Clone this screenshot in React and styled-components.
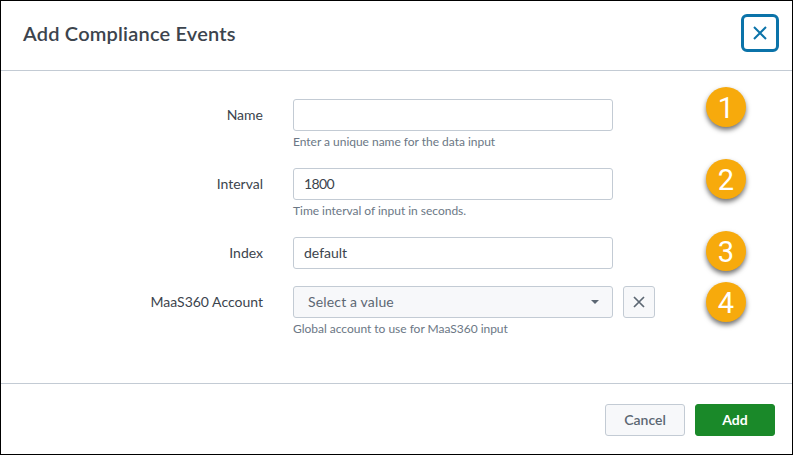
import React from "react";
import styled, { createGlobalStyle } from "styled-components";

const GlobalStyle = createGlobalStyle`
  *, *::before, *::after { box-sizing: border-box; }
  body { margin: 0; background: #fff; }
  button, input { font: inherit; letter-spacing: inherit; margin: 0; }
`;

const Modal = styled.div`
  display: flex;
  flex-direction: column;
  width: 793px;
  height: 455px;
  overflow: hidden;
  border: 1px solid #000;
  background: #fff;
  color: #3c444d;
  font: 400 14px/20px Lato, sans-serif;
`;

const Header = styled.header`
  display: flex;
  align-items: center;
  justify-content: space-between;
  height: 70px;
  padding: 0 13px 5px 22px;
  border-bottom: 1px solid #c3cbd4;
`;

const Title = styled.h1`
  margin: 0;
  font-size: 20px;
  line-height: 24px;
  font-weight: 600;
  letter-spacing: 0.2px;
`;

const CloseButton = styled.button`
  display: grid;
  place-items: center;
  width: 38px;
  height: 38px;
  padding: 0;
  border: 3px solid #0b73a9;
  border-radius: 6px;
  background: #fff;
  color: #0b73a9;
`;

const Form = styled.form`
  flex: 1;
  display: flex;
  flex-direction: column;
  padding: 28px 0 0 22px;
`;

const Row = styled.div`
  position: relative;
  display: grid;
  grid-template-columns: 240px 362px;
  column-gap: 30px;
  height: ${(p) => p.$height}px;
`;

const Label = styled.label`
  height: 32px;
  line-height: 31px;
  text-align: right;
`;

const Field = styled.div`
  display: flex;
  flex-direction: column;
`;

const Controls = styled.div`
  display: flex;
  gap: 10px;
`;

const TextInput = styled.input`
  width: 320px;
  height: 32px;
  padding: 0 10px 2px;
  border: 1px solid #c3cbd4;
  border-radius: 3px;
  background: #fff;
  color: #3c444d;
  letter-spacing: ${(p) => (p.$numeric ? "-0.6px" : "normal")};
  outline: none;
`;

const Select = styled.button`
  display: flex;
  align-items: center;
  justify-content: space-between;
  width: 320px;
  height: 32px;
  padding: 0 13px 1px 14px;
  border: 1px solid #c3cbd4;
  border-radius: 3px;
  background: #f7f8fa;
  color: #5c6773;
  letter-spacing: 0.16px;
`;

const ClearButton = styled.button`
  display: grid;
  place-items: center;
  width: 32px;
  height: 32px;
  padding: 0;
  border: 1px solid #c3cbd4;
  border-radius: 3px;
  background: #f7f8fa;
  color: #5c6773;
`;

const Hint = styled.span`
  margin-top: 3px;
  font-size: 12px;
  line-height: 16px;
  letter-spacing: -0.02px;
  color: #6b7785;
`;

const Badge = styled.span`
  position: absolute;
  left: 683px;
  top: ${(p) => p.$top}px;
  width: 40px;
  height: 40px;
  border-radius: 50%;
  background: #f7aa0c;
  box-shadow: 0 3px 5px rgba(0, 0, 0, 0.55);
  color: #fff;
  font: 400 29px/42px Roboto, sans-serif;
  text-align: center;
`;

const Footer = styled.footer`
  display: flex;
  justify-content: flex-end;
  gap: 10px;
  height: 71px;
  padding: 20px 17px 0 0;
  border-top: 1px solid #c3cbd4;
`;

const ActionButton = styled.button`
  width: 80px;
  height: 32px;
  padding: 0 0 1px;
  border: 1px solid ${(p) => (p.$primary ? "#1a8929" : "#c3cbd4")};
  border-radius: 3px;
  background: ${(p) => (p.$primary ? "#1a8929" : "#f7f8fa")};
  color: ${(p) => (p.$primary ? "#fff" : "#5c6773")};
  font-weight: ${(p) => (p.$primary ? 700 : 600)};
`;

const Cross = ({ size, weight }) => (
  <svg width={size} height={size} viewBox={`0 0 ${size} ${size}`} aria-hidden="true">
    <path d={`M1 1 L${size - 1} ${size - 1} M${size - 1} 1 L1 ${size - 1}`} stroke="currentColor" strokeWidth={weight} fill="none" />
  </svg>
);

const Caret = () => (
  <svg width="8" height="4" viewBox="0 0 8 4" aria-hidden="true">
    <path d="M0 0H8L4 4Z" fill="currentColor" />
  </svg>
);

const rows = [
  { id: "name", label: "Name", value: "", hint: "Enter a unique name for the data input", height: 69, badge: -12 },
  { id: "interval", label: "Interval", value: "1800", numeric: true, hint: "Time interval of input in seconds.", height: 69, badge: -9 },
  { id: "index", label: "Index", value: "default", height: 49, badge: -6 },
  { id: "account", label: "MaaS360 Account", select: true, hint: "Global account to use for MaaS360 input", height: 52, badge: -4 },
];

export default function App() {
  return (
    <>
      <GlobalStyle />
      <Modal>
        <Header>
          <Title>Add Compliance Events</Title>
          <CloseButton aria-label="Close"><Cross size={14} weight={2} /></CloseButton>
        </Header>
        <Form>
          {rows.map((row, i) => (
            <Row key={row.id} $height={row.height}>
              <Label htmlFor={row.id}>{row.label}</Label>
              <Field>
                <Controls>
                  {row.select ? (
                    <>
                      <Select id={row.id} type="button">Select a value<Caret /></Select>
                      <ClearButton type="button" aria-label="Clear"><Cross size={12} weight={1.7} /></ClearButton>
                    </>
                  ) : (
                    <TextInput id={row.id} defaultValue={row.value} $numeric={row.numeric} />
                  )}
                </Controls>
                {row.hint && <Hint>{row.hint}</Hint>}
              </Field>
              <Badge $top={row.badge}>{i + 1}</Badge>
            </Row>
          ))}
        </Form>
        <Footer>
          <ActionButton type="button">Cancel</ActionButton>
          <ActionButton type="button" $primary>Add</ActionButton>
        </Footer>
      </Modal>
    </>
  );
}
